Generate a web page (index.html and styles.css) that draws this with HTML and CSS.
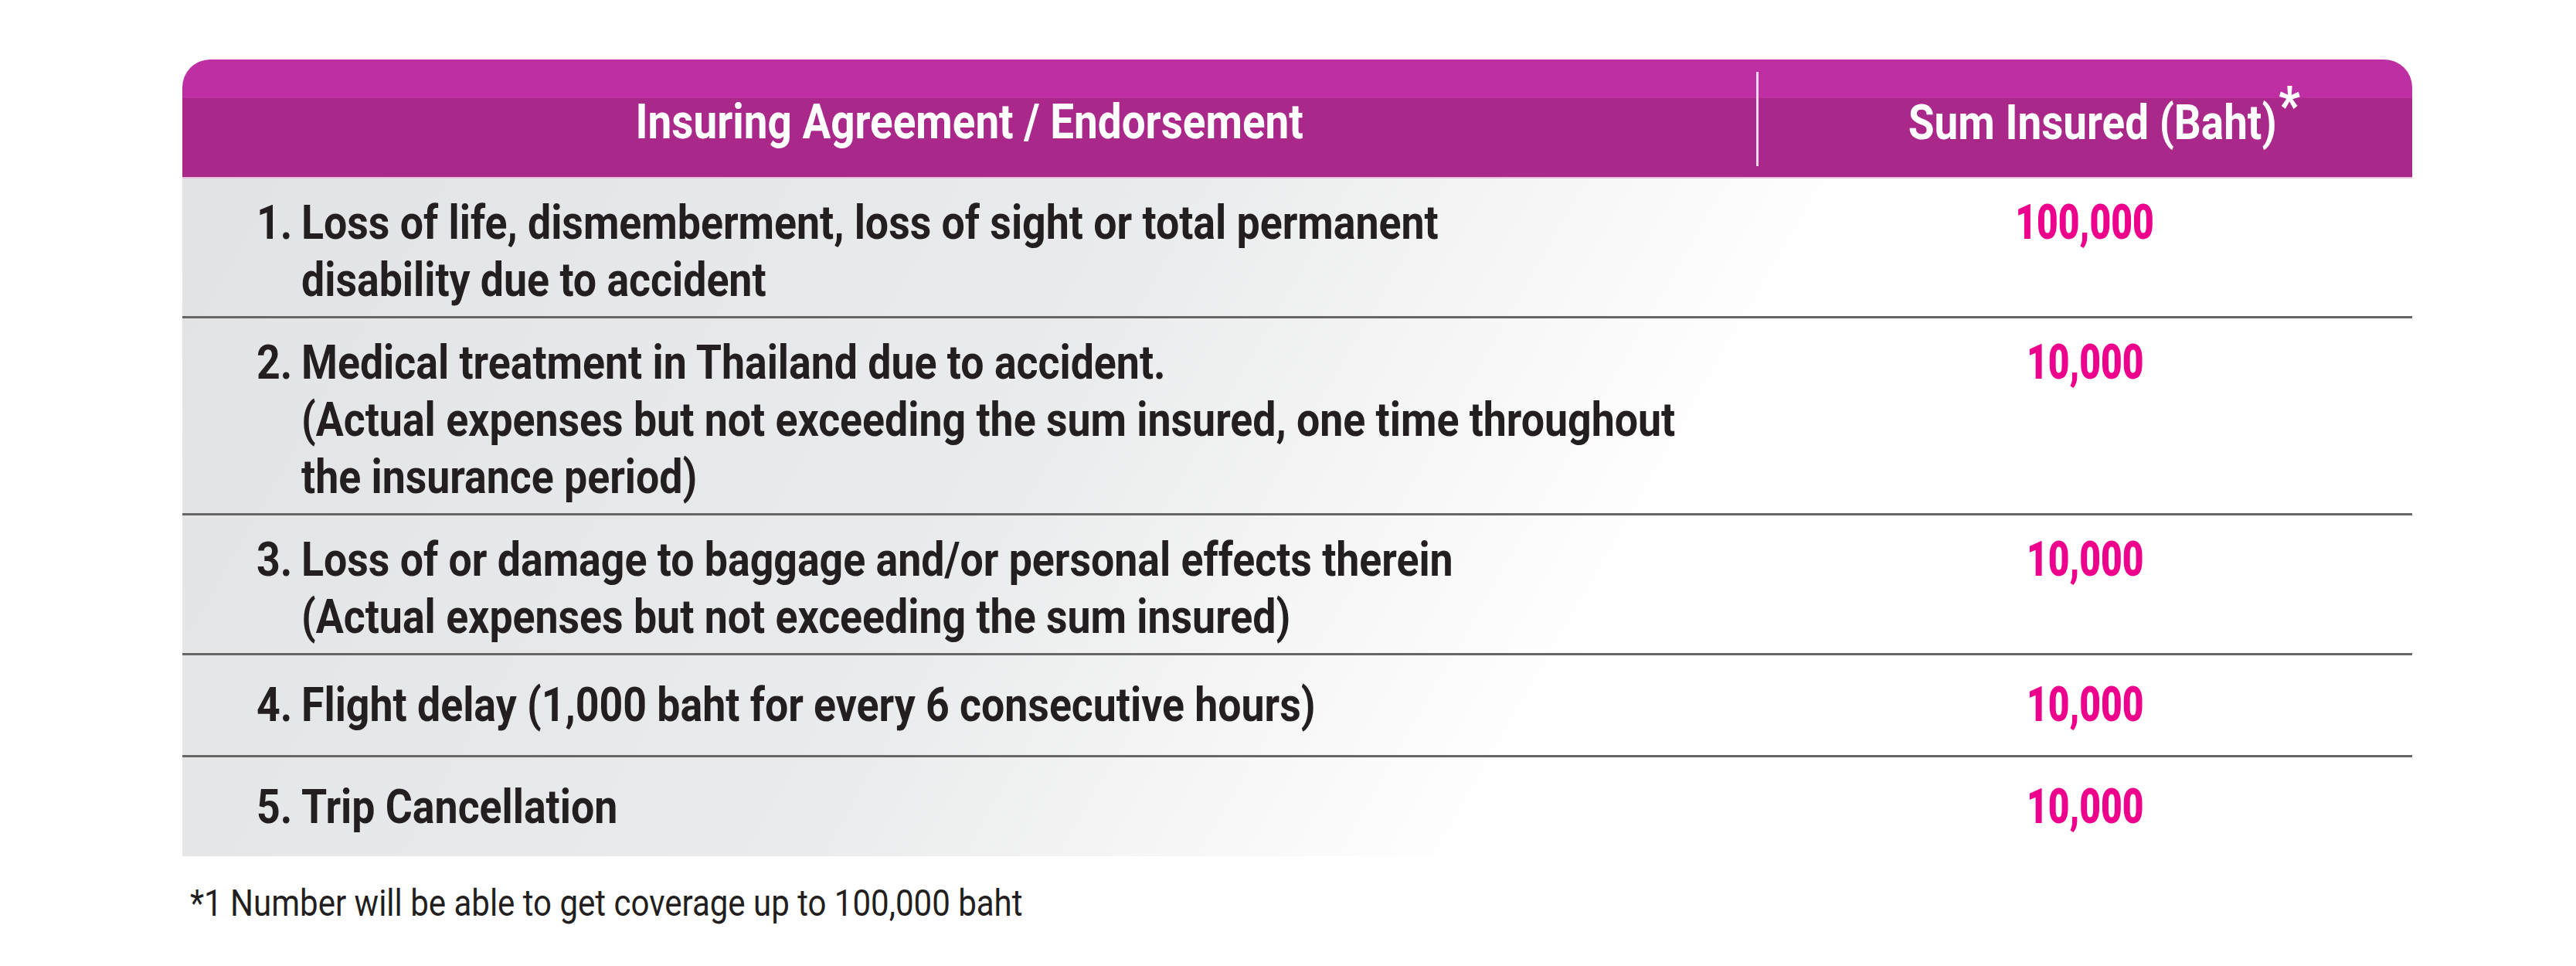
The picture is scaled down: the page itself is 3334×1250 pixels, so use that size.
FILE: index.html
```html
<!DOCTYPE html>
<html lang="en">
<head>
<meta charset="utf-8">
<title>Coverage table</title>
<link rel="stylesheet" href="styles.css">
</head>
<body>
<main class="page">
  <section class="table">
    <div class="thead">
      <div class="th th-left"><span class="cond">Insuring Agreement / Endorsement</span></div>
      <div class="th-divider"></div>
      <div class="th th-right"><span class="cond">Sum Insured (Baht)<span class="star">*</span></span></div>
    </div>
    <div class="tbody">
      <div class="row">
        <div class="item"><span class="num"><span class="cond-l">1.</span></span><span class="cond-l">Loss of life, dismemberment, loss of sight or total permanent<br>disability due to accident</span></div>
        <div class="amount"><span class="cond-a">100,000</span></div>
      </div>
      <div class="row">
        <div class="item"><span class="num"><span class="cond-l">2.</span></span><span class="cond-l">Medical treatment in Thailand due to accident.<br>(Actual expenses but not exceeding the sum insured, one time throughout<br>the insurance period)</span></div>
        <div class="amount"><span class="cond-a">10,000</span></div>
      </div>
      <div class="row">
        <div class="item"><span class="num"><span class="cond-l">3.</span></span><span class="cond-l">Loss of or damage to baggage and/or personal effects therein<br>(Actual expenses but not exceeding the sum insured)</span></div>
        <div class="amount"><span class="cond-a">10,000</span></div>
      </div>
      <div class="row row-single">
        <div class="item"><span class="num"><span class="cond-l">4.</span></span><span class="cond-l">Flight delay (1,000 baht for every 6 consecutive hours)</span></div>
        <div class="amount"><span class="cond-a">10,000</span></div>
      </div>
      <div class="row row-single row-last">
        <div class="item"><span class="num"><span class="cond-l">5.</span></span><span class="cond-l">Trip Cancellation</span></div>
        <div class="amount"><span class="cond-a">10,000</span></div>
      </div>
    </div>
  </section>
  <p class="note"><span class="cond-n">*1 Number will be able to get coverage up to 100,000 baht</span></p>
</main>
</body>
</html>
```
FILE: styles.css
```css
html, body {
  margin: 0;
  padding: 0;
  background: #ffffff;
}
body {
  font-family: Roboto, "Liberation Sans", sans-serif;
  color: #231f20;
}
.page {
  padding: 77px 0 0 236px;
  width: 2886px;
}
.table {
  width: 2886px;
}
.cond {
  display: inline-block;
  white-space: nowrap;
  transform: scaleX(0.87);
  transform-origin: 50% 50%;
}
.cond-l {
  display: inline-block;
  white-space: nowrap;
  transform: scaleX(0.865);
  transform-origin: 0 50%;
}
.cond-a {
  display: inline-block;
  white-space: nowrap;
  transform: scaleX(0.76);
  transform-origin: 50% 50%;
}
.cond-n {
  display: inline-block;
  white-space: nowrap;
  transform: scaleX(0.875);
  transform-origin: 0 50%;
}
.thead {
  display: flex;
  height: 154px;
  box-sizing: border-box;
  border-radius: 36px 36px 0 0;
  background: linear-gradient(to bottom, #bd2fa3 0, #bd2fa3 50px, #a9288a 50px, #a9288a 100%);
  border-bottom: 2px solid #e6bfdc;
  color: #ffffff;
}
.th {
  font-weight: 700;
  font-size: 63px;
  line-height: 75px;
  padding-top: 43px;
  text-align: center;
}
.th-left {
  flex: 0 0 2037px;
}
.th-divider {
  flex: 0 0 3px;
  height: 122px;
  margin-top: 16px;
  background: #f3d9ec;
}
.th-right {
  flex: 1 1 auto;
  padding-left: 48px;
}
.star {
  display: inline-block;
  position: relative;
  top: -20px;
  margin-left: 3px;
  font-size: 68px;
  font-weight: 900;
}
.tbody {
  background: linear-gradient(120deg, #e2e3e4 0%, #eaebec 38%, #ffffff 64%, #ffffff 100%);
}
.row {
  display: grid;
  grid-template-columns: 2039px 1fr;
  border-bottom: 3px solid #666666;
  padding: 20px 0 10px;
}
.row-single {
  padding: 27px 0 28px;
}
.row-last {
  border-bottom: none;
  padding-bottom: 27px;
}
.item {
  display: flex;
  padding-left: 96px;
  font-size: 62px;
  line-height: 74px;
  font-weight: 700;
}
.num {
  flex: 0 0 58px;
}
.amount {
  text-align: center;
  color: #ec008c;
  font-weight: 900;
  font-size: 63px;
  line-height: 74px;
  align-self: start;
}
.note {
  margin: 33px 0 0 10px;
  font-size: 48px;
  line-height: 56px;
}
```
